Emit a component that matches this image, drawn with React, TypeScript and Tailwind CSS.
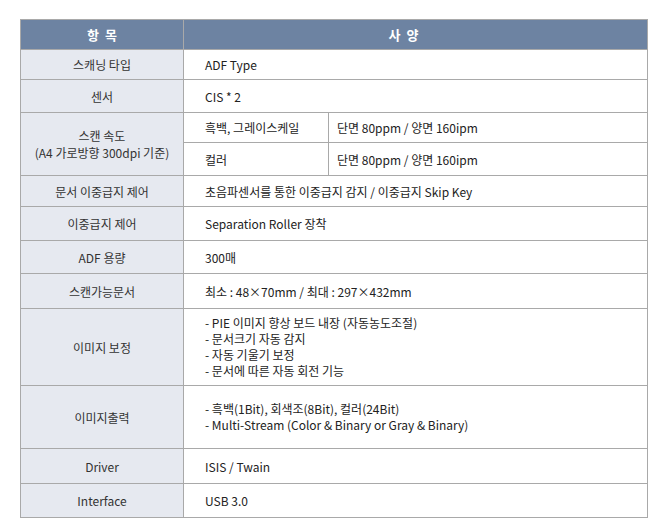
const font = { fontFamily: '"Noto Sans CJK KR", "Noto Sans", sans-serif' };

interface Row {
  label: React.ReactNode;
  value: React.ReactNode;
  h: string;
}

const rows: Row[] = [
  { label: "스캐닝 타입", value: "ADF Type", h: "h-[30px]" },
  { label: "센서", value: "CIS * 2", h: "h-[33px]" },
];

const rowsAfter: Row[] = [
  { label: "문서 이중급지 제어", value: "초음파센서를 통한 이중급지 감지 / 이중급지 Skip Key", h: "h-[31px]" },
  { label: "이중급지 제어", value: "Separation Roller 장착", h: "h-[34px]" },
  { label: "ADF 용량", value: "300매", h: "h-[33px]" },
  { label: "스캔가능문서", value: "최소 : 48×70mm /  최대 : 297×432mm", h: "h-[35px]" },
  {
    label: "이미지 보정",
    value: (
      <div className="leading-[16px]">
        <div>- PIE 이미지 향상 보드 내장 (자동농도조절)</div>
        <div>- 문서크기 자동 감지</div>
        <div>- 자동 기울기 보정</div>
        <div>- 문서에 따른 자동 회전 기능</div>
      </div>
    ),
    h: "h-[77px]",
  },
  {
    label: "이미지출력",
    value: (
      <div className="leading-[16px]">
        <div>- 흑백(1Bit), 회색조(8Bit), 컬러(24Bit)</div>
        <div>- Multi-Stream (Color &amp; Binary or Gray &amp; Binary)</div>
      </div>
    ),
    h: "h-[63px]",
  },
  { label: "Driver", value: "ISIS / Twain", h: "h-[35px]" },
  { label: "Interface", value: "USB 3.0", h: "h-[34px]" },
];

const labelCls = "border border-[#a9a9a9] bg-[#e6e9f0] text-center align-middle text-[#333]";
const valueCls = "border border-[#a9a9a9] bg-white pl-[21px] text-left align-middle text-[#222]";
const subCls = "border border-[#a9a9a9] bg-white pl-[8px] align-middle text-[#222]";

function SimpleRow({ r }: { r: Row }) {
  return (
    <tr className={r.h}>
      <td className={labelCls}>{r.label}</td>
      <td className={valueCls} colSpan={2}>{r.value}</td>
    </tr>
  );
}

export default function App() {
  return (
    <div className="h-[531px] w-[662px] bg-white pt-[19px] pl-[20px]" style={font}>
      <table className="w-[627px] table-fixed border-collapse text-[12px] leading-[15px]">
        <colgroup>
          <col className="w-[163px]" />
          <col className="w-[145px]" />
          <col className="w-[319px]" />
        </colgroup>
        <tbody>
          <tr className="h-[30px]">
            <th className="border border-[#a9a9a9] bg-[#6d83a2] text-center align-middle text-[13px] font-bold text-white">
              항&nbsp;&nbsp;목
            </th>
            <th colSpan={2} className="border border-[#a9a9a9] bg-[#6d83a2] pr-[24px] text-center align-middle text-[13px] font-bold text-white">
              사&nbsp;&nbsp;양
            </th>
          </tr>
          {rows.map((r, i) => <SimpleRow key={i} r={r} />)}
          <tr className="h-[30px]">
            <td rowSpan={2} className={labelCls + " leading-[17px]"}>
              <div>스캔 속도</div>
              <div>(A4 가로방향 300dpi 기준)</div>
            </td>
            <td className={valueCls}>흑백, 그레이스케일</td>
            <td className={subCls}>단면 80ppm / 양면 160ipm</td>
          </tr>
          <tr className="h-[33px]">
            <td className={valueCls}>컬러</td>
            <td className={subCls}>단면 80ppm / 양면 160ipm</td>
          </tr>
          {rowsAfter.map((r, i) => <SimpleRow key={i} r={r} />)}
        </tbody>
      </table>
    </div>
  );
}
